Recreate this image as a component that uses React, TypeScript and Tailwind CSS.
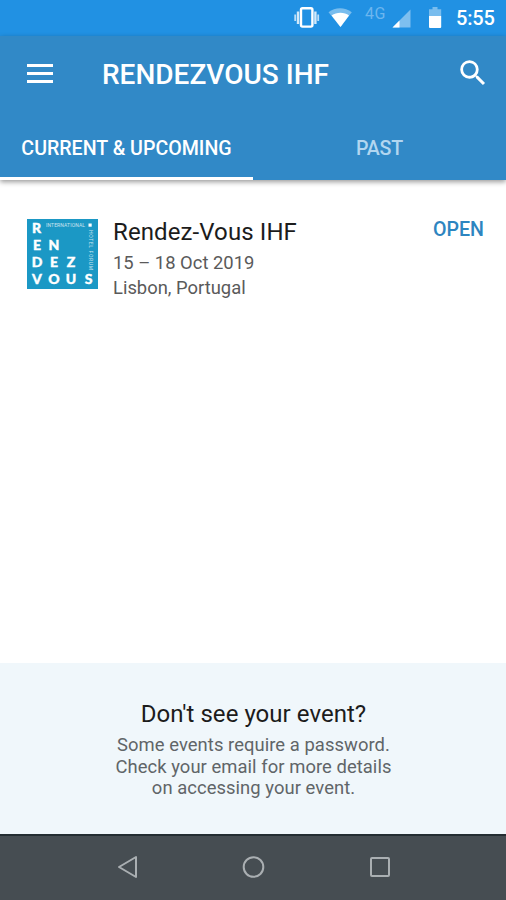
const logoLetters = [
  { char: "R", x: 9.5, y: 14 },
  { char: "E", x: 10, y: 31 },
  { char: "N", x: 27, y: 31 },
  { char: "D", x: 10, y: 48 },
  { char: "E", x: 27, y: 48 },
  { char: "Z", x: 44, y: 48 },
  { char: "V", x: 10, y: 65 },
  { char: "O", x: 27, y: 65 },
  { char: "U", x: 44, y: 65 },
  { char: "S", x: 61.5, y: 65 },
];

function StatusBar() {
  return (
    <div className="flex h-9 items-center bg-[#2191e3] pl-[293px] text-white">
      <svg width="28" height="36" viewBox="0 0 28 36" fill="none">
        <rect x="8" y="8.2" width="11.4" height="18.4" rx="1.5" stroke="white" strokeWidth="2.4" />
        <path d="M5 11.5v12.5M22.4 11.5v12.5" stroke="white" strokeOpacity=".8" strokeWidth="2.4" />
        <path d="M2.2 14.5v6.5M25.2 14.5v6.5" stroke="white" strokeOpacity=".7" strokeWidth="1.8" />
      </svg>
      <svg width="26" height="36" viewBox="0 0 26 36" className="ml-[6px]" fill="white">
        <path d="M1.5 12.3C8 7 18 7 24.8 12.3L13.5 27Z" opacity=".4" />
        <path d="M4.6 15.6C9.5 11.8 17.5 11.8 22 15.6L13.5 27Z" />
      </svg>
      <span className="ml-[12px] -mt-[9px] w-[22px] text-[16px] leading-none tracking-[0.5px] text-[#6cb6ef]">4G</span>
      <svg width="20" height="36" viewBox="0 0 20 36" className="ml-[5px]" fill="white">
        <path d="M18.5 9.5V27.5H.5Z" opacity=".42" />
        <path d="M7.5 20.5V27.5H.5Z" />
      </svg>
      <svg width="14" height="36" viewBox="0 0 14 36" className="ml-[16px]" fill="white">
        <path d="M4.5 7h5v2.2H13.2V16H1V9.2h3.5Z" opacity=".4" />
        <path d="M1 16h12.2v11a1 1 0 0 1-1 1H2a1 1 0 0 1-1-1Z" />
      </svg>
      <span className="ml-[14px] text-[20px] font-medium leading-none tracking-[-0.2px]">5:55</span>
    </div>
  );
}

function Header() {
  return (
    <header className="relative z-10 h-36 bg-[#3189c7] shadow-[0_2px_5px_rgba(0,0,0,0.4)]">
      <div className="flex h-[78px] items-center text-white">
        <button className="-mt-[3px] ml-[27px] flex h-[19px] w-[26px] flex-col justify-between">
          <span className="h-[3px] w-full bg-white" />
          <span className="h-[3px] w-full bg-white" />
          <span className="h-[3px] w-full bg-white" />
        </button>
        <h1 className="ml-[49px] w-[340px] whitespace-nowrap text-[28px] font-medium leading-8">RENDEZVOUS IHF</h1>
        <button className="-mt-[4px] ml-[14px]">
          <svg width="34" height="34" viewBox="0 0 24 24" fill="currentColor">
            <path d="M15.5 14h-.79l-.28-.27A6.47 6.47 0 0 0 16 9.5 6.5 6.5 0 1 0 9.5 16c1.61 0 3.09-.59 4.23-1.57l.27.28v.79l5 4.99L20.49 19l-4.99-5zm-6 0C7.01 14 5 11.99 5 9.5S7.01 5 9.5 5 14 7.01 14 9.5 11.99 14 9.5 14z" />
          </svg>
        </button>
      </div>
      <nav className="grid h-[66px] grid-cols-2 text-center text-[19.6px] font-medium">
        <div className="border-b-[3px] border-white pt-[21px] leading-7 text-white">CURRENT &amp; UPCOMING</div>
        <div className="pt-[21px] leading-7 tracking-[-0.2px] text-[#b2d6f0]">PAST</div>
      </nav>
    </header>
  );
}

function EventLogo() {
  return (
    <svg width="71" height="70" viewBox="0 0 71 70" className="shrink-0 bg-[#1b98c5]" fill="white">
      {logoLetters.map((l) => (
        <text
          key={l.char + l.x + l.y}
          x={l.x}
          y={l.y}
          textAnchor="middle"
          stroke="white"
          strokeWidth="0.4"
          className="font-[Lato] text-[14px] font-black"
        >
          {l.char}
        </text>
      ))}
      <text x="19" y="8.2" textLength="39" className="text-[5px]" opacity=".75">INTERNATIONAL</text>
      <rect x="61.5" y="4.5" width="3.2" height="3.2" />
      <text transform="translate(61.5 11) rotate(90)" textLength="40" className="text-[5px]" opacity=".75">HOTEL FORUM</text>
    </svg>
  );
}

function EventList() {
  return (
    <main className="flex-1 bg-white pl-[27px] pr-[22px] pt-[39px]">
      <article className="flex">
        <EventLogo />
        <div className="ml-[15px] flex-1 text-[18.4px] leading-[25px] text-[#5a5a5a]">
          <h2 className="mb-[4px] text-[24px] leading-[27px] tracking-[0.1px] text-[#1c1c1c]">Rendez-Vous IHF</h2>
          <p>15 – 18 Oct 2019</p>
          <p>Lisbon, Portugal</p>
        </div>
        <button className="mt-px h-5 text-[19.6px] font-medium leading-5 text-[#2d85c0]">OPEN</button>
      </article>
    </main>
  );
}

function PasswordHint() {
  return (
    <section className="h-[171px] bg-[#f0f7fb] pl-px pt-9 text-center">
      <h3 className="text-[24px] leading-[30px] tracking-[0.04px] text-[#1c1c1c]">Don't see your event?</h3>
      <p className="mt-[5px] text-[18.4px] leading-[21.7px] tracking-[0.06px] text-[#606568]">
        Some events require a password.
        <br />
        Check your email for more details
        <br />
        on accessing your event.
      </p>
    </section>
  );
}

function NavBar() {
  return (
    <footer className="flex h-[66px] items-center justify-between border-t-2 border-[#242d32] bg-[#464d52] px-[116px] pb-[3px]">
      <svg width="22" height="24" viewBox="0 0 22 24" fill="none" stroke="#aaafb2" strokeWidth="2" strokeLinejoin="round">
        <path d="M20 2v20L3 12Z" />
      </svg>
      <svg width="24" height="24" viewBox="0 0 24 24" fill="none" stroke="#aaafb2" strokeWidth="2">
        <circle cx="12.5" cy="12" r="9.8" />
      </svg>
      <svg width="22" height="24" viewBox="0 0 22 24" fill="none" stroke="#aaafb2" strokeWidth="2">
        <rect x="3" y="3" width="18" height="18" rx="1" />
      </svg>
    </footer>
  );
}

export default function App() {
  return (
    <div className="flex h-[900px] w-[506px] flex-col overflow-hidden font-[Roboto,sans-serif]">
      <StatusBar />
      <Header />
      <EventList />
      <PasswordHint />
      <NavBar />
    </div>
  );
}
